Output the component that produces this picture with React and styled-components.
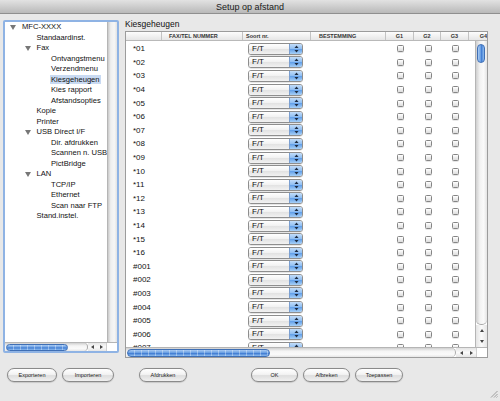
import React from "react";
import styled, { createGlobalStyle } from "styled-components";

const GlobalStyle = createGlobalStyle`
  html, body { margin: 0; padding: 0; background: #e8e8e8; }
  body { font-family: "Liberation Sans", Arial, sans-serif; color: #111; }
`;

const treeItems = [
  { label: "MFC-XXXX", level: 0, open: true },
  { label: "Standaardinst.", level: 1 },
  { label: "Fax", level: 1, open: true },
  { label: "Ontvangstmenu", level: 2 },
  { label: "Verzendmenu", level: 2 },
  { label: "Kiesgeheugen", level: 2, selected: true },
  { label: "Kies rapport", level: 2 },
  { label: "Afstandsopties", level: 2 },
  { label: "Kopie", level: 1 },
  { label: "Printer", level: 1 },
  { label: "USB Direct I/F", level: 1, open: true },
  { label: "Dir. afdrukken", level: 2 },
  { label: "Scannen n. USB", level: 2 },
  { label: "PictBridge", level: 2 },
  { label: "LAN", level: 1, open: true },
  { label: "TCP/IP", level: 2 },
  { label: "Ethernet", level: 2 },
  { label: "Scan naar FTP", level: 2 },
  { label: "Stand.instel.", level: 1 },
];

const numbers = [
  ...Array.from({ length: 16 }, (_, i) => "*" + String(i + 1).padStart(2, "0")),
  ...Array.from({ length: 7 }, (_, i) => "#" + String(i + 1).padStart(3, "0")),
];

const columns = [
  { label: "", pad: 0 },
  { label: "FAX/TEL NUMMER", pad: 7 },
  { label: "Soort nr.", pad: 3 },
  { label: "BESTEMMING", pad: 8 },
  { label: "G1", center: true },
  { label: "G2", center: true },
  { label: "G3", center: true },
  { label: "G4", center: true },
];

const GRID = "36px 81px 68px 75px 28px 27px 28px 30px";
const indent = (level) => 17 + level * 14.5;

export default function App() {
  return (
    <>
      <GlobalStyle />
      <Window>
        <TitleBar>Setup op afstand</TitleBar>
        <Main>
          <TreePanel>
            <TreeBody>
              <TreeList>
                {treeItems.map((it) => (
                  <TreeRow key={it.label} $level={it.level}>
                    {it.open && <Disclosure $level={it.level} />}
                    <TreeLabel $selected={it.selected}>{it.label}</TreeLabel>
                  </TreeRow>
                ))}
              </TreeList>
              <VTrackPlain />
            </TreeBody>
            <HScrollBar $h={8}>
              <HTrack>
                <HThumb $w={62} />
              </HTrack>
              <ArrowPair $w={18}>
                <Arrow $dir="left" />
                <Arrow $dir="right" />
              </ArrowPair>
              <Corner $w={10} />
            </HScrollBar>
          </TreePanel>

          <RightPane>
            <PaneTitle>Kiesgeheugen</PaneTitle>
            <TableFrame>
              <HeaderRow>
                {columns.map((c, i) => (
                  <HeaderCell key={i} $pad={c.pad} $center={c.center}>
                    {c.label}
                  </HeaderCell>
                ))}
              </HeaderRow>
              <TableBody>
                <Viewport>
                  {numbers.map((n) => (
                    <Row key={n}>
                      <NumCell>{n}</NumCell>
                      <Cell />
                      <Cell>
                        <Popup>
                          <PopupText>F/T</PopupText>
                          <PopupStepper>
                            <svg width="5" height="8" viewBox="0 0 5 8">
                              <path d="M2.5 0.5 L4.5 3 L0.5 3 Z" fill="#1d2b40" />
                              <path d="M2.5 7.5 L4.5 5 L0.5 5 Z" fill="#1d2b40" />
                            </svg>
                          </PopupStepper>
                        </Popup>
                      </Cell>
                      <Cell />
                      <CheckCell><Check /></CheckCell>
                      <CheckCell><Check /></CheckCell>
                      <CheckCell><Check /></CheckCell>
                      <CheckCell><Check /></CheckCell>
                    </Row>
                  ))}
                </Viewport>
                <VScrollBar>
                  <VTrack>
                    <VThumb />
                  </VTrack>
                  <VArrow><Arrow $dir="up" /></VArrow>
                  <VArrow><Arrow $dir="down" /></VArrow>
                </VScrollBar>
              </TableBody>
              <HScrollBar $h={9}>
                <HTrack>
                  <HThumb $w={143} />
                </HTrack>
                <ArrowPair $w={20}>
                  <Arrow $dir="left" />
                  <Arrow $dir="right" />
                </ArrowPair>
                <Corner $w={10} />
              </HScrollBar>
            </TableFrame>
          </RightPane>
        </Main>

        <ButtonBar>
          <ButtonGroup>
            <PushButton $w={50}>Exporteren</PushButton>
            <PushButton $w={52}>Importeren</PushButton>
          </ButtonGroup>
          <ButtonGroup $ml={25}>
            <PushButton $w={48}>Afdrukken</PushButton>
          </ButtonGroup>
          <ButtonGroup $ml={64}>
            <PushButton $w={47}>OK</PushButton>
            <PushButton $w={47}>Afbreken</PushButton>
            <PushButton $w={48}>Toepassen</PushButton>
          </ButtonGroup>
        </ButtonBar>
        <Grip>
          <svg width="8" height="8" viewBox="0 0 8 8">
            <path d="M7.5 1 L1 7.5 M7.5 4 L4 7.5 M7.5 6.5 L6.5 7.5" stroke="#8a8a8a" strokeWidth="0.8" />
          </svg>
        </Grip>
      </Window>
    </>
  );
}

const Window = styled.div`
  position: relative;
  width: 500px;
  height: 401px;
  background: #e8e8e8;
  overflow: hidden;
  display: flex;
  flex-direction: column;
`;

const TitleBar = styled.div`
  height: 13px;
  flex: none;
  display: flex;
  align-items: center;
  justify-content: center;
  font-size: 9px;
  color: #1a1a1a;
  background: linear-gradient(#e2e2e2, #b9b9b9);
  border-bottom: 1px solid #8f8f8f;
`;

const Main = styled.div`
  display: flex;
  gap: 6px;
  padding: 6px 0 0 3px;
  height: 338px;
  flex: none;
`;

const TreePanel = styled.div`
  width: 112px;
  height: 329px;
  border: 2px solid #8fb3e4;
  border-radius: 2px;
  display: flex;
  flex-direction: column;
  background: #fff;
`;

const TreeBody = styled.div`
  flex: 1;
  display: flex;
  min-height: 0;
`;

const TreeList = styled.div`
  flex: 1;
  overflow: hidden;
  background: #fff;
`;

const TreeRow = styled.div`
  position: relative;
  height: 10.5px;
  line-height: 10.5px;
  font-size: 7.6px;
  white-space: nowrap;
  padding-left: ${(p) => indent(p.$level)}px;
`;

const Disclosure = styled.span`
  position: absolute;
  top: 3px;
  left: ${(p) => indent(p.$level) - 12}px;
  width: 0;
  height: 0;
  border-left: 3px solid transparent;
  border-right: 3px solid transparent;
  border-top: 5px solid #777;
`;

const TreeLabel = styled.span`
  padding: 0 1px;
  margin-left: -1px;
  background: ${(p) => (p.$selected ? "#c9daf2" : "transparent")};
`;

const VTrackPlain = styled.div`
  width: 9px;
  background: linear-gradient(90deg, #c8c8c8, #eeeeee 30%, #f6f6f6 70%, #e2e2e2);
  border-left: 1px solid #b5b5b5;
`;

const HScrollBar = styled.div`
  height: ${(p) => p.$h}px;
  flex: none;
  display: flex;
  align-items: stretch;
  background: #fff;
  border-top: 1px solid #b5b5b5;
`;

const HTrack = styled.div`
  flex: 1;
  position: relative;
  display: flex;
  align-items: center;
  padding-left: 1px;
  border-radius: 0 5px 5px 0;
  background: linear-gradient(#d0d0d0, #f4f4f4 35%, #fafafa 70%, #e6e6e6);
  border-right: 1px solid #a8a8a8;
`;

const HThumb = styled.div`
  width: ${(p) => p.$w}px;
  height: calc(100% - 1px);
  border-radius: 5px;
  border: 1px solid #3f6fb5;
  box-sizing: border-box;
  background:
    repeating-linear-gradient(90deg, transparent 0 6px, rgba(255,255,255,0.35) 6px 7px),
    linear-gradient(#a9cbf3, #6a9fe3 45%, #3f7bd2 55%, #8fbdf0);
`;

const ArrowPair = styled.div`
  width: ${(p) => p.$w}px;
  display: flex;
  align-items: center;
  justify-content: space-around;
  background: linear-gradient(#e4e4e4, #fafafa 50%, #e6e6e6);
`;

const Corner = styled.div`
  width: ${(p) => p.$w}px;
  background: #fff;
  border-left: 1px solid #cfcfcf;
`;

const Arrow = styled.span`
  width: 0;
  height: 0;
  ${(p) =>
    p.$dir === "left"
      ? "border-top: 2.5px solid transparent; border-bottom: 2.5px solid transparent; border-right: 3.5px solid #444;"
      : p.$dir === "right"
      ? "border-top: 2.5px solid transparent; border-bottom: 2.5px solid transparent; border-left: 3.5px solid #444;"
      : p.$dir === "up"
      ? "border-left: 2.5px solid transparent; border-right: 2.5px solid transparent; border-bottom: 3.5px solid #444;"
      : "border-left: 2.5px solid transparent; border-right: 2.5px solid transparent; border-top: 3.5px solid #444;"}
`;

const RightPane = styled.div`
  width: 363px;
  display: flex;
  flex-direction: column;
`;

const PaneTitle = styled.div`
  height: 11px;
  line-height: 9px;
  font-size: 8.5px;
  color: #111;
`;

const TableFrame = styled.div`
  height: 325px;
  border: 1px solid #9c9c9c;
  background: #fff;
  display: flex;
  flex-direction: column;
  overflow: hidden;
`;

const HeaderRow = styled.div`
  height: 8px;
  flex: none;
  display: grid;
  grid-template-columns: ${GRID};
  background: linear-gradient(#fdfdfd, #e6e6e6);
  border-bottom: 1px solid #b9b9b9;
`;

const HeaderCell = styled.div`
  font-size: 5.5px;
  line-height: 8px;
  font-weight: bold;
  color: #333;
  white-space: nowrap;
  overflow: hidden;
  border-right: 1px solid #c3c3c3;
  padding-left: ${(p) => (p.$center ? 0 : p.$pad)}px;
  text-align: ${(p) => (p.$center ? "center" : "left")};
`;

const TableBody = styled.div`
  flex: 1;
  display: flex;
  min-height: 0;
`;

const Viewport = styled.div`
  flex: 1;
  overflow: hidden;
  padding-top: 1px;
`;

const Row = styled.div`
  height: 13.6px;
  display: grid;
  grid-template-columns: ${GRID};
  align-items: center;
`;

const Cell = styled.div`
  display: flex;
  align-items: center;
  height: 100%;
`;

const NumCell = styled(Cell)`
  font-size: 8px;
  padding-left: 7px;
  color: #111;
`;

const CheckCell = styled(Cell)`
  justify-content: center;
`;

const Check = styled.span`
  width: 7px;
  height: 7px;
  box-sizing: border-box;
  border: 1px solid #858585;
  border-radius: 1.5px;
  background: linear-gradient(#ffffff, #dcdcdc);
  box-shadow: 0 0.5px 0 rgba(0, 0, 0, 0.2);
  margin-left: 1px;
`;

const Popup = styled.div`
  margin-left: 5px;
  width: 55px;
  height: 12px;
  box-sizing: border-box;
  display: flex;
  border: 1px solid #8e8e8e;
  border-radius: 3px;
  overflow: hidden;
  box-shadow: 0 0.5px 0 rgba(0, 0, 0, 0.2);
`;

const PopupText = styled.div`
  flex: 1;
  font-size: 8px;
  line-height: 10px;
  padding-left: 3px;
  background: linear-gradient(#ffffff, #f1f1f1 50%, #e2e2e2 51%, #f2f2f2);
`;

const PopupStepper = styled.div`
  width: 12px;
  display: flex;
  align-items: center;
  justify-content: center;
  border-left: 1px solid #7b9fd0;
  background: linear-gradient(#c3ddf9, #8dbdf2 50%, #5f9de8 51%, #a7d0f7);
`;

const VScrollBar = styled.div`
  width: 11px;
  display: flex;
  flex-direction: column;
  border-left: 1px solid #b5b5b5;
  background: #fff;
`;

const VTrack = styled.div`
  flex: 1;
  padding: 3px 0 0 1px;
  border-radius: 0 0 5px 5px;
  border-bottom: 1px solid #a8a8a8;
  background: linear-gradient(90deg, #cfcfcf, #f2f2f2 35%, #fafafa 70%, #e4e4e4);
`;

const VThumb = styled.div`
  width: 8px;
  height: 19px;
  box-sizing: border-box;
  border-radius: 4px;
  border: 1px solid #3f6fb5;
  background: linear-gradient(90deg, #a9cbf3, #6a9fe3 45%, #3f7bd2 55%, #8fbdf0);
`;

const VArrow = styled.div`
  height: 11px;
  display: flex;
  align-items: center;
  justify-content: center;
  background: linear-gradient(90deg, #e4e4e4, #fafafa 50%, #e6e6e6);
`;

const ButtonBar = styled.div`
  display: flex;
  align-items: center;
  padding: 10px 0 0 7px;
`;

const ButtonGroup = styled.div`
  display: flex;
  gap: 5px;
  margin-left: ${(p) => p.$ml || 0}px;
`;

const PushButton = styled.button`
  width: ${(p) => p.$w}px;
  height: 14px;
  padding: 0;
  font-family: "Liberation Sans", Arial, sans-serif;
  font-size: 5.5px;
  color: #222;
  border: 1px solid #8a8a8a;
  border-radius: 7px;
  background: linear-gradient(#ffffff, #f3f3f3 45%, #dedede 55%, #f0f0f0);
  box-shadow: 0 0.5px 1px rgba(0, 0, 0, 0.25);
`;

const Grip = styled.div`
  position: absolute;
  right: 2px;
  bottom: 3px;
  width: 8px;
  height: 8px;
  line-height: 0;
`;
